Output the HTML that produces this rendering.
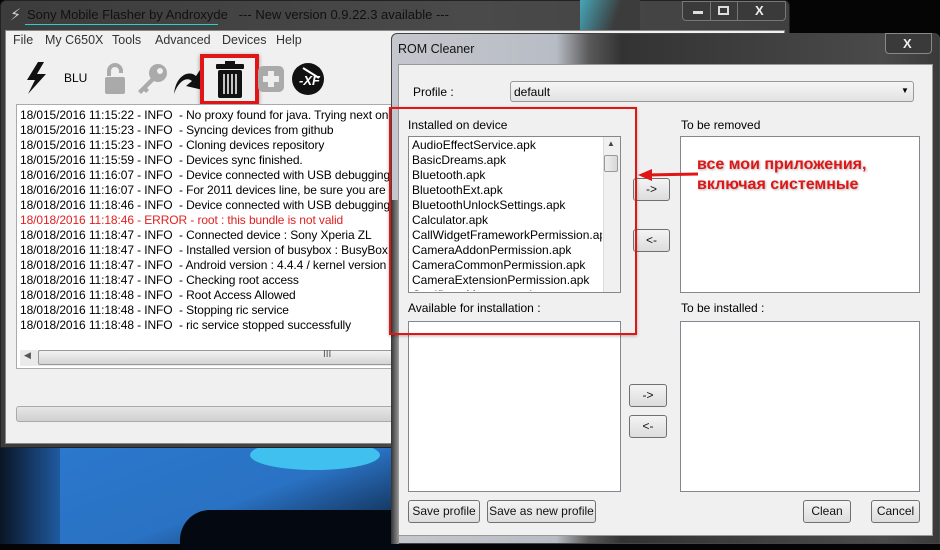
<!DOCTYPE html>
<html><head><meta charset="utf-8"><style>
*{margin:0;padding:0;box-sizing:border-box}
body{width:940px;height:544px;overflow:hidden;position:relative;background:#050505;font-family:"Liberation Sans","DejaVu Sans",sans-serif;font-size:12px;color:#000}
.a{position:absolute}
.t{position:absolute;white-space:nowrap}
.btn{position:absolute;border:1px solid #707070;border-radius:3px;background:linear-gradient(#f4f4f4,#dcdcdc);text-align:center;font-size:12px;line-height:21px;color:#111}
.box{position:absolute;background:#fff;border:1px solid #828790}
</style></head><body>
<div class="a" style="left:0;top:350px;width:400px;height:194px;background:linear-gradient(160deg,#0b2440 0%,#2b78cc 35%,#2a72c4 70%,#0a1a30 100%)"></div>
<div class="a" style="left:250px;top:440px;width:130px;height:30px;border-radius:50%;background:#3fc0ee"></div>
<div class="a" style="left:180px;top:510px;width:220px;height:40px;border-radius:30px 0 0 0;background:#040810"></div>
<div class="a" style="left:0;top:420px;width:60px;height:124px;background:linear-gradient(90deg,#0a1525,#1f5aa0)"></div>
<!-- main window -->
<div class="a" style="left:0;top:0;width:790px;height:448px;background:linear-gradient(90deg,#3c3c3c,#4a4a4a 60%,#404040);border:1px solid #222;border-radius:6px 6px 0 0"></div>
<div class="a" style="left:580px;top:0;width:60px;height:30px;background:linear-gradient(110deg,#46a6b8 0,#3c3c3c 60%)"></div>
<div class="t" style="left:10px;top:5px;font-size:16px;color:#ccc">⚡</div>
<div class="t" style="left:27px;top:7px;font-size:13px;color:#111">Sony Mobile Flasher by Androxyde &nbsp;&nbsp;--- New version 0.9.22.3 available ---</div>
<div class="a" style="left:25px;top:24px;width:193px;height:1px;background:#3cc"></div>
<div class="a" style="left:682px;top:1px;width:104px;height:20px;border:1px solid #777;border-radius:0 0 4px 4px;background:#3a3a3a"></div>
<div class="a" style="left:710px;top:1px;width:1px;height:20px;background:#777"></div>
<div class="a" style="left:737px;top:1px;width:1px;height:20px;background:#777"></div>
<div class="a" style="left:693px;top:11px;width:10px;height:3px;background:#ddd"></div>
<div class="a" style="left:718px;top:6px;width:11px;height:9px;border:2px solid #ddd"></div>
<div class="t" style="left:755px;top:3px;color:#eee;font-weight:bold;font-size:13px">X</div>
<div class="a" style="left:5px;top:30px;width:780px;height:414px;background:#f0f0f0;border:1px solid #888"></div>
<div class="t" style="left:13px;top:33px;font-size:12.5px;color:#333">File</div>
<div class="t" style="left:45px;top:33px;font-size:12.5px;color:#333">My C650X</div>
<div class="t" style="left:112px;top:33px;font-size:12.5px;color:#333">Tools</div>
<div class="t" style="left:155px;top:33px;font-size:12.5px;color:#333">Advanced</div>
<div class="t" style="left:222px;top:33px;font-size:12.5px;color:#333">Devices</div>
<div class="t" style="left:276px;top:33px;font-size:12.5px;color:#333">Help</div>
<svg class="a" style="left:22px;top:60px" width="28" height="36" viewBox="0 0 28 36"><path d="M16 2 L5 20 L13 20 L6 34 L24 14 L15 14 L22 2Z" fill="#111"/></svg>
<div class="t" style="left:64px;top:71px;font-size:12px">BLU</div>
<svg class="a" style="left:102px;top:62px" width="26" height="34"><path d="M5 14 V9 a8 8 0 0 1 16 0 V11 h-4 V9 a4 4 0 0 0 -8 0 V14Z" fill="#aaa"/><rect x="3" y="15" width="20" height="17" rx="2" fill="#aaa"/></svg>
<svg class="a" style="left:135px;top:62px" width="34" height="34"><circle cx="23" cy="11" r="9" fill="#aaa"/><circle cx="25" cy="9" r="3" fill="#f0f0f0"/><path d="M17 15 L3 29 L6 32 L9 29 L11 31 L14 28 L12 26 L20 18Z" fill="#aaa"/></svg>
<svg class="a" style="left:172px;top:64px" width="32" height="30"><path d="M2 30 C4 10 18 6 24 12 L28 6 L31 26 L14 22 L20 17 C14 12 6 18 2 30Z" fill="#111"/></svg>
<div class="a" style="left:200px;top:54px;width:59px;height:51px;border:4px solid #e01515;box-shadow:0 1px 4px rgba(0,0,0,.4)"></div>
<svg class="a" style="left:216px;top:61px" width="28" height="37"><rect x="0" y="3" width="28" height="5" rx="1" fill="#111"/><rect x="9" y="0" width="10" height="4" fill="#111"/><rect x="2" y="9" width="24" height="28" rx="2" fill="#111"/><g stroke="#fff" stroke-width="1.5"><line x1="8" y1="13" x2="8" y2="33"/><line x1="12" y1="13" x2="12" y2="33"/><line x1="16" y1="13" x2="16" y2="33"/><line x1="20" y1="13" x2="20" y2="33"/></g></svg>
<svg class="a" style="left:256px;top:64px" width="30" height="30"><rect x="2" y="2" width="26" height="26" rx="5" fill="#aaa"/><rect x="12" y="7" width="6" height="16" fill="#eee"/><rect x="7" y="12" width="16" height="6" fill="#eee"/></svg>
<svg class="a" style="left:291px;top:62px" width="34" height="34"><circle cx="17" cy="17" r="16" fill="#111"/><text x="8" y="23" font-size="13" font-weight="bold" fill="#fff" font-family="Liberation Sans" font-style="italic">-XF</text><line x1="12" y1="6" x2="28" y2="16" stroke="#fff" stroke-width="2"/></svg>
<div class="box" style="left:16px;top:104px;width:380px;height:265px;border-color:#aaa"></div>
<div style="position:absolute;left:20px;top:108px;font-size:12px;line-height:15px;white-space:nowrap;width:372px;overflow:hidden;letter-spacing:-0.1px">
18/015/2016 11:15:22 - INFO &nbsp;- No proxy found for java. Trying next one<br>
18/015/2016 11:15:23 - INFO &nbsp;- Syncing devices from github<br>
18/015/2016 11:15:23 - INFO &nbsp;- Cloning devices repository<br>
18/015/2016 11:15:59 - INFO &nbsp;- Devices sync finished.<br>
18/016/2016 11:16:07 - INFO &nbsp;- Device connected with USB debugging<br>
18/016/2016 11:16:07 - INFO &nbsp;- For 2011 devices line, be sure you are not<br>
18/018/2016 11:18:46 - INFO &nbsp;- Device connected with USB debugging<br>
<span style="color:#e02020">18/018/2016 11:18:46 - ERROR - root : this bundle is not valid</span><br>
18/018/2016 11:18:47 - INFO &nbsp;- Connected device : Sony Xperia ZL<br>
18/018/2016 11:18:47 - INFO &nbsp;- Installed version of busybox : BusyBox v<br>
18/018/2016 11:18:47 - INFO &nbsp;- Android version : 4.4.4 / kernel version :<br>
18/018/2016 11:18:47 - INFO &nbsp;- Checking root access<br>
18/018/2016 11:18:48 - INFO &nbsp;- Root Access Allowed<br>
18/018/2016 11:18:48 - INFO &nbsp;- Stopping ric service<br>
18/018/2016 11:18:48 - INFO &nbsp;- ric service stopped successfully</div>
<div class="a" style="left:20px;top:350px;width:372px;height:16px;background:#eaeaea"></div>
<div class="a" style="left:38px;top:350px;width:360px;height:15px;border:1px solid #999;border-radius:2px;background:linear-gradient(#f2f2f2,#d4d4d4)"></div>
<div class="t" style="left:24px;top:350px;font-size:9px;color:#555">◀</div>
<div class="t" style="left:323px;top:349px;font-size:10px;color:#555">III</div>
<div class="a" style="left:16px;top:406px;width:380px;height:16px;border:1px solid #aaa;border-radius:3px;background:linear-gradient(#e6e6e6,#d0d0d0)"></div>
<!-- dialog -->
<div class="a" style="left:391px;top:33px;width:549px;height:511px;background:linear-gradient(90deg,#c4c7cd 0,#b8bcc4 30%,#5a5a5a 36%,#333 42%,#4a4a4a 90%,#3a3a3a);border:1px solid #444;border-radius:6px 6px 0 0"></div>
<div class="a" style="left:391px;top:200px;width:8px;height:344px;background:linear-gradient(90deg,#333,#999)"></div>
<div class="t" style="left:398px;top:42px;font-size:12.5px;color:#111">ROM Cleaner</div>
<div class="a" style="left:885px;top:33px;width:47px;height:21px;border:1px solid #888;border-radius:0 0 4px 4px;background:#3a3a3a"></div>
<div class="t" style="left:903px;top:36px;color:#eee;font-weight:bold;font-size:13px">X</div>
<div class="a" style="left:398px;top:64px;width:535px;height:472px;background:#f0f0f0;border:1px solid #999"></div>
<div class="t" style="left:413px;top:85px">Profile :</div>
<div class="a" style="left:510px;top:81px;width:404px;height:21px;border:1px solid #999;border-radius:3px;background:linear-gradient(#f6f6f6,#e2e2e2)"></div>
<div class="t" style="left:514px;top:85px">default</div>
<div class="t" style="left:901px;top:86px;font-size:8px">▼</div>
<div class="t" style="left:408px;top:118px">Installed on device</div>
<div class="t" style="left:681px;top:118px">To be removed</div>
<div class="box" style="left:408px;top:136px;width:213px;height:157px"></div>
<div style="position:absolute;left:412px;top:138px;width:190px;height:153px;overflow:hidden;font-size:12px;line-height:15px;white-space:nowrap">
AudioEffectService.apk<br>BasicDreams.apk<br>Bluetooth.apk<br>BluetoothExt.apk<br>BluetoothUnlockSettings.apk<br>Calculator.apk<br>CallWidgetFrameworkPermission.apk<br>CameraAddonPermission.apk<br>CameraCommonPermission.apk<br>CameraExtensionPermission.apk<br>CertificateManager.apk</div>
<div class="a" style="left:603px;top:137px;width:17px;height:155px;background:#f0f0f0;border-left:1px solid #ddd"></div>
<div class="t" style="left:607px;top:139px;font-size:8px;color:#444">▲</div>
<div class="a" style="left:604px;top:155px;width:14px;height:17px;border:1px solid #999;border-radius:2px;background:linear-gradient(90deg,#eee,#d8d8d8)"></div>
<div class="box" style="left:680px;top:136px;width:240px;height:157px"></div>
<div class="btn" style="left:633px;top:178px;width:37px;height:23px">-&gt;</div>
<div class="btn" style="left:633px;top:229px;width:37px;height:23px">&lt;-</div>
<div class="t" style="left:408px;top:301px">Available for installation :</div>
<div class="t" style="left:681px;top:301px">To be installed :</div>
<div class="box" style="left:408px;top:321px;width:213px;height:171px"></div>
<div class="box" style="left:680px;top:321px;width:240px;height:171px"></div>
<div class="btn" style="left:629px;top:384px;width:38px;height:23px">-&gt;</div>
<div class="btn" style="left:629px;top:415px;width:38px;height:23px">&lt;-</div>
<div class="btn" style="left:408px;top:500px;width:72px;height:23px">Save profile</div>
<div class="btn" style="left:487px;top:500px;width:109px;height:23px">Save as new profile</div>
<div class="btn" style="left:803px;top:500px;width:48px;height:23px">Clean</div>
<div class="btn" style="left:871px;top:500px;width:49px;height:23px">Cancel</div>
<div class="a" style="left:389px;top:107px;width:248px;height:228px;border:2px solid #e01515;box-shadow:0 1px 3px rgba(0,0,0,.3)"></div>
<svg class="a" style="left:636px;top:166px" width="64" height="18"><line x1="10" y1="9" x2="62" y2="8" stroke="#e01515" stroke-width="3"/><path d="M2 9 L16 3 L16 15Z" fill="#e01515"/></svg>
<div class="t" style="left:697px;top:155px;font-size:16px;font-weight:bold;color:#e01515;line-height:20px;text-shadow:1px 1px 2px rgba(0,0,0,.3)">все мои приложения,<br>включая системные</div>
</body></html>
